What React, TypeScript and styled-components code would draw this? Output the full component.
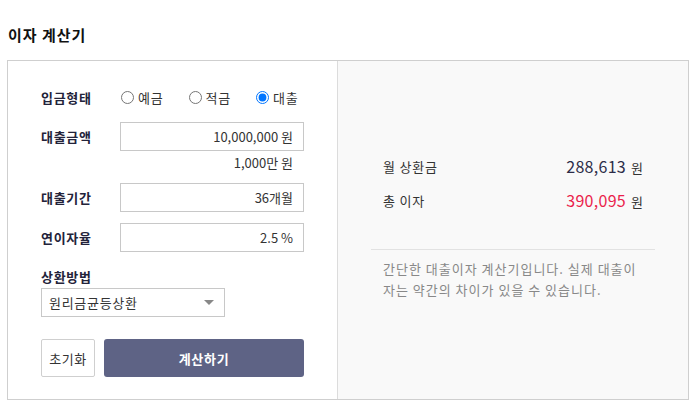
import React, { useState } from "react";
import styled, { createGlobalStyle } from "styled-components";

const GlobalStyle = createGlobalStyle`
  body {
    margin: 0;
    background: #fff;
    font-family: "Noto Sans CJK KR", "Noto Sans", sans-serif;
    font-size: 13px;
    color: #333;
  }
`;

const KINDS = ["예금", "적금", "대출"];

export default function App() {
  const [kind, setKind] = useState("대출");

  return (
    <Page>
      <GlobalStyle />
      <Title>이자 계산기</Title>
      <Card>
        <FormPanel>
          <Row>
            <Label>입금형태</Label>
            <RadioGroup>
              {KINDS.map((k) => (
                <RadioItem key={k}>
                  <input
                    type="radio"
                    name="kind"
                    checked={kind === k}
                    onChange={() => setKind(k)}
                  />
                  {k}
                </RadioItem>
              ))}
            </RadioGroup>
          </Row>
          <Row $top={13}>
            <Label>대출금액</Label>
            <Field>10,000,000 원</Field>
          </Row>
          <Hint>1,000만 원</Hint>
          <Row $top={8}>
            <Label>대출기간</Label>
            <Field>36개월</Field>
          </Row>
          <Row $top={11}>
            <Label>연이자율</Label>
            <Field>2.5 %</Field>
          </Row>
          <BlockLabel>상환방법</BlockLabel>
          <SelectBox>
            <span>원리금균등상환</span>
            <Caret />
          </SelectBox>
          <Buttons>
            <ResetButton>초기화</ResetButton>
            <SubmitButton>계산하기</SubmitButton>
          </Buttons>
        </FormPanel>

        <ResultPanel>
          <ResultRow>
            <ResultName>월 상환금</ResultName>
            <ResultValue>
              <Amount>288,613</Amount>
              <Unit>원</Unit>
            </ResultValue>
          </ResultRow>
          <ResultRow>
            <ResultName>총 이자</ResultName>
            <ResultValue>
              <Amount $red>390,095</Amount>
              <Unit>원</Unit>
            </ResultValue>
          </ResultRow>
          <Divider />
          <Note>
            간단한 대출이자 계산기입니다. 실제 대출이
            <br />
            자는 약간의 차이가 있을 수 있습니다.
          </Note>
        </ResultPanel>
      </Card>
    </Page>
  );
}

const Page = styled.div`
  padding: 0 7px;
`;

const Title = styled.h1`
  margin: 0;
  padding: 25px 0 0 1px;
  height: 35px;
  box-sizing: border-box;
  font-size: 15px;
  font-weight: 700;
  letter-spacing: 1px;
  line-height: 20px;
  color: #111;
`;

const Card = styled.div`
  display: flex;
  width: 682px;
  height: 340px;
  margin-top: 25px;
  box-sizing: border-box;
  border: 1px solid #cfcfcf;
`;

const FormPanel = styled.div`
  width: 330px;
  padding: 24px 0 0 33px;
  box-sizing: border-box;
  border-right: 1px solid #dcdcdc;
  background: #fff;
`;

const Row = styled.div<{ $top?: number }>`
  display: flex;
  align-items: center;
  margin-top: ${(p) => p.$top ?? 0}px;
  min-height: 24px;
`;

const Label = styled.div`
  width: 79px;
  font-size: 13px;
  font-weight: 700;
  letter-spacing: 0.7px;
  color: #23233a;
`;

const RadioGroup = styled.div`
  display: flex;
  gap: 24px;
`;

const RadioItem = styled.label`
  display: flex;
  align-items: center;
  gap: 2px;
  font-size: 13px;
  letter-spacing: 0.8px;
  color: #333;

  input {
    margin: 0 2px 0 1px;
    width: 13px;
    height: 13px;
  }
`;

const Field = styled.div`
  width: 184px;
  height: 29px;
  box-sizing: border-box;
  border: 1px solid #c8c8c8;
  padding: 0 10px;
  display: flex;
  align-items: center;
  justify-content: flex-end;
  font-size: 13px;
  color: #333;
`;

const Hint = styled.div`
  width: 252px;
  height: 24px;
  line-height: 24px;
  text-align: right;
  font-size: 13px;
  color: #333;
`;

const BlockLabel = styled(Label)`
  margin-top: 15px;
  height: 20px;
  line-height: 20px;
  width: auto;
`;

const SelectBox = styled.div`
  width: 184px;
  height: 29px;
  margin-top: 1px;
  box-sizing: border-box;
  border: 1px solid #c8c8c8;
  padding: 0 10px 0 7px;
  display: flex;
  align-items: center;
  justify-content: space-between;
  font-size: 13px;
  letter-spacing: 0.7px;
  color: #333;
`;

const Caret = styled.span`
  width: 0;
  height: 0;
  border-left: 5px solid transparent;
  border-right: 5px solid transparent;
  border-top: 5px solid #888;
`;

const Buttons = styled.div`
  display: flex;
  gap: 9px;
  margin-top: 22px;
`;

const ResetButton = styled.button`
  width: 54px;
  height: 38px;
  padding: 0;
  border: 1px solid #cfcfcf;
  border-radius: 2px;
  background: #fff;
  font-family: inherit;
  font-size: 13px;
  letter-spacing: 0.5px;
  color: #333;
`;

const SubmitButton = styled.button`
  width: 200px;
  height: 38px;
  border: none;
  border-radius: 3px;
  background: #5e6385;
  font-family: inherit;
  font-size: 13px;
  font-weight: 700;
  letter-spacing: 0.7px;
  color: #fff;
`;

const ResultPanel = styled.div`
  flex: 1;
  padding: 93px 33px 0;
  background: #f9f9f9;
`;

const ResultRow = styled.div`
  display: flex;
  align-items: center;
  justify-content: space-between;
  height: 24px;
  padding: 0 12px;

  & + & {
    margin-top: 10px;
  }
`;

const ResultName = styled.div`
  font-size: 13px;
  letter-spacing: 0.8px;
  color: #333;
`;

const ResultValue = styled.div`
  display: flex;
  align-items: baseline;
`;

const Amount = styled.span<{ $red?: boolean }>`
  font-size: 16px;
  letter-spacing: 0.3px;
  color: ${(p) => (p.$red ? "#ea1f4c" : "#2c2c48")};
`;

const Unit = styled.span`
  margin-left: 5px;
  font-size: 13px;
  color: #333;
`;

const Divider = styled.div`
  margin-top: 37px;
  border-top: 1px solid #e2e2e2;
`;

const Note = styled.p`
  margin: 8px 0 0;
  padding: 0 12px;
  font-size: 13px;
  letter-spacing: 1px;
  line-height: 21px;
  color: #888;
`;
